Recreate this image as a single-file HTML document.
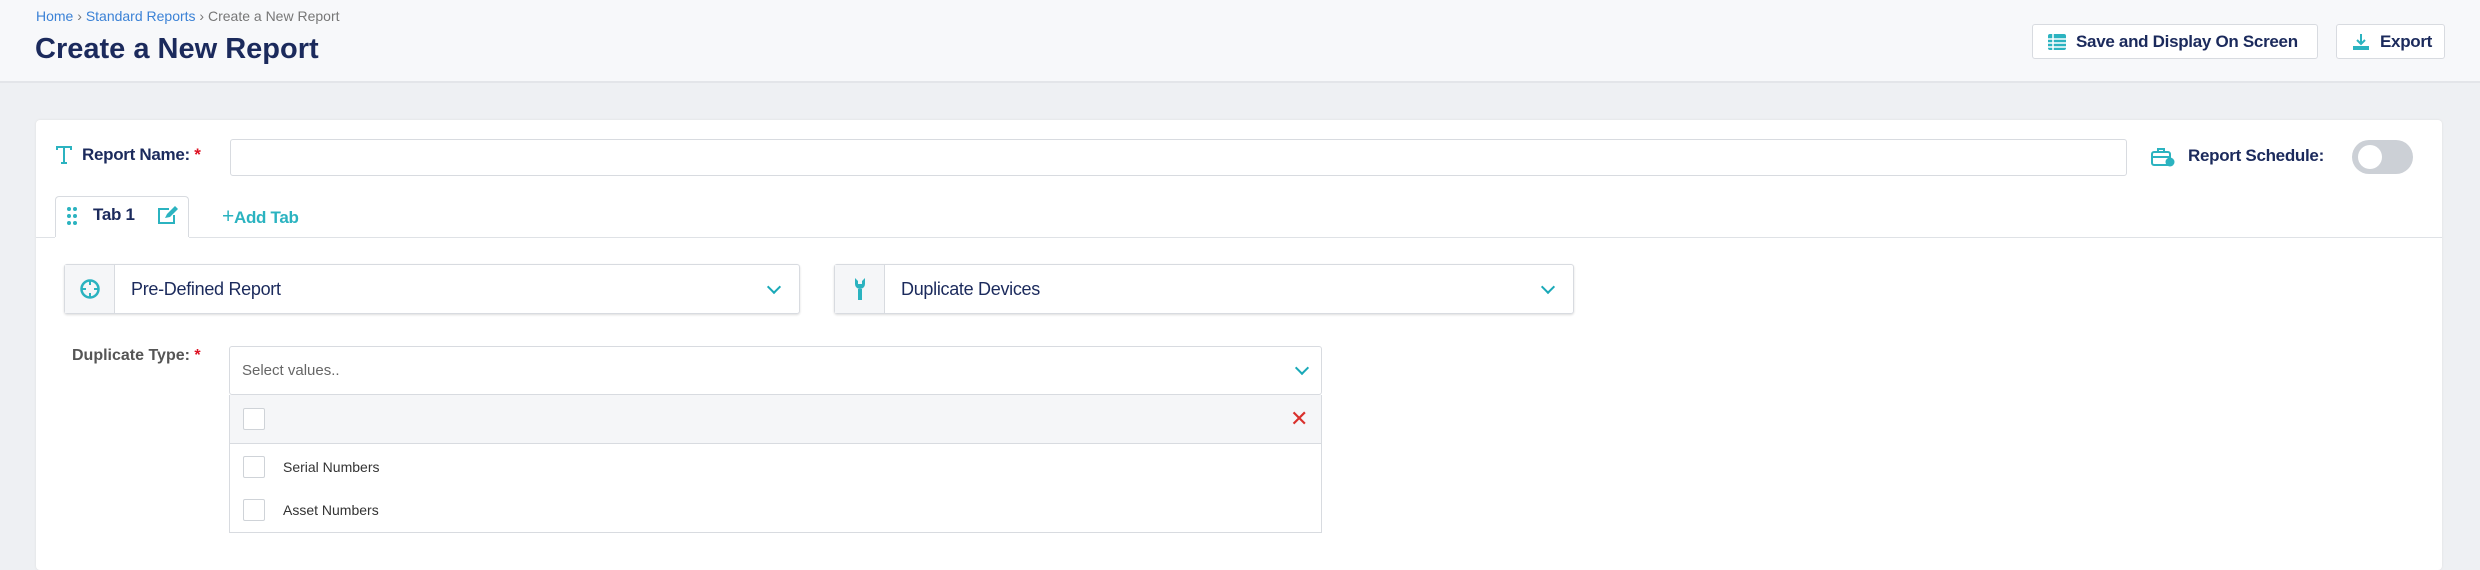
<!DOCTYPE html>
<html><head><meta charset="utf-8"><style>
*{box-sizing:border-box;margin:0;padding:0}
body{width:2480px;height:558px;overflow:hidden;background:#eef0f3;font-family:"Liberation Sans",sans-serif;position:relative}
.a{position:absolute;white-space:nowrap}
.hdr{left:0;top:0;width:2480px;height:83px;background:#f7f8fa;border-bottom:2px solid #e3e5e9}
.bc{left:36px;top:8px;font-size:14px;color:#777}
.bc span{color:#3b82d6}
.title{left:35px;top:33px;font-size:29px;font-weight:bold;color:#1b2a5c;font-family:"Liberation Sans Narrow","Liberation Sans",sans-serif}
.btn{background:#fff;border:1px solid #d8dbe0;border-radius:3px;height:35px;top:24px;font-size:17px;font-weight:bold;color:#1b2a5c;font-family:"Liberation Sans Narrow","Liberation Sans",sans-serif;display:flex;align-items:center;padding-left:14px;gap:9px;letter-spacing:-0.3px}
.card{left:36px;top:120px;width:2406px;height:450px;background:#fff;border-radius:4px;box-shadow:0 0 2px #ddd}
.lbl{font-size:17px;font-weight:bold;color:#1b2a5c;font-family:"Liberation Sans Narrow","Liberation Sans",sans-serif;letter-spacing:-0.3px}
.inp{border:1px solid #d8dbe0;border-radius:3px;background:#fff}
.sel{border:1px solid #d8dbe0;border-radius:3px;height:50px;top:264px;box-shadow:0 1px 2px #ddd;display:flex;align-items:center}
.sel .ic{width:50px;height:100%;background:#f5f6f8;border-right:1px solid #d8dbe0;display:flex;align-items:center;justify-content:center}
.sel .t{padding-left:16px;font-size:18px;color:#1b2a5c;flex:1;font-family:"Liberation Sans Narrow","Liberation Sans",sans-serif;letter-spacing:-0.3px}
.chev{width:10px;height:10px;border-right:2px solid #1aa9b8;border-bottom:2px solid #1aa9b8;transform:rotate(45deg);margin-right:20px;margin-top:-5px}
.cb{width:22px;height:22px;border:1px solid #cfd3d8;border-radius:2px;background:#fff}
.opt{font-size:15px;color:#333;font-family:"Liberation Sans Narrow","Liberation Sans",sans-serif}
</style></head><body>
<div class="a hdr"></div>
<div class="a bc"><span>Home</span> › <span>Standard Reports</span> › Create a New Report</div>
<div class="a title">Create a New Report</div>
<div class="a btn" style="left:2032px;width:286px"><svg width="20" height="18" viewBox="0 0 20 18"><rect x="1" y="1" width="18" height="16" rx="2" fill="#2bb3c0"/><path d="M1 6h18M1 10h18M1 14h18M6 1v16" stroke="#fff" stroke-width="1.5"/></svg>Save and Display On Screen</div>
<div class="a btn" style="left:2336px;width:109px"><svg width="20" height="20" viewBox="0 0 20 20"><path d="M10 2v10M6 8l4 4 4-4" stroke="#2bb3c0" stroke-width="2" fill="none"/><rect x="2" y="14" width="16" height="4" fill="#2bb3c0"/></svg>Export</div>
<div class="a card"></div>
<svg class="a" style="left:55px;top:145px" width="18" height="20" viewBox="0 0 18 20"><path d="M2 5V2h14v3M9 2v16M6 18h6" stroke="#2bb3c0" stroke-width="2" fill="none"/></svg>
<div class="a lbl" style="left:82px;top:145px">Report Name: <span style="color:#d12">*</span></div>
<div class="a inp" style="left:230px;top:139px;width:1897px;height:37px"></div>
<svg class="a" style="left:2151px;top:147px" width="24" height="20" viewBox="0 0 24 20"><rect x="1" y="5" width="18" height="13" rx="2" stroke="#2bb3c0" stroke-width="2" fill="none"/><path d="M7 5V2h6v3M1 10h18" stroke="#2bb3c0" stroke-width="2" fill="none"/><circle cx="19" cy="15" r="4.5" fill="#2bb3c0"/></svg>
<div class="a lbl" style="left:2188px;top:146px">Report Schedule:</div>
<div class="a" style="left:2352px;top:140px;width:61px;height:34px;border-radius:17px;background:#ccd0d6"><div class="a" style="left:6px;top:5px;width:24px;height:24px;border-radius:12px;background:#fff"></div></div>
<div class="a" style="left:55px;top:196px;width:134px;height:42px;border:1px solid #d8dbe0;border-bottom:none;border-radius:4px 4px 0 0;background:#fff"></div>
<div class="a" style="left:36px;top:237px;width:2406px;height:1px;background:#dfe2e6"></div>
<div class="a" style="left:55px;top:237px;width:134px;height:2px;background:#fff"></div>
<svg class="a" style="left:66px;top:206px" width="12" height="20" viewBox="0 0 12 20"><g fill="#2bb3c0"><circle cx="3" cy="3" r="2"/><circle cx="9" cy="3" r="2"/><circle cx="3" cy="10" r="2"/><circle cx="9" cy="10" r="2"/><circle cx="3" cy="17" r="2"/><circle cx="9" cy="17" r="2"/></g></svg>
<div class="a lbl" style="left:93px;top:205px">Tab 1</div>
<svg class="a" style="left:157px;top:205px" width="22" height="20" viewBox="0 0 22 20"><path d="M12 4H2v14h15v-8" stroke="#2bb3c0" stroke-width="2" fill="none"/><path d="M8 13l2-4 8-8 3 3-8 8z" fill="#2bb3c0"/></svg>
<div class="a lbl" style="left:222px;top:205px;color:#2bb3c0;font-weight:bold"><span style="font-weight:normal;font-size:21px">+</span>Add Tab</div>
<div class="a sel" style="left:64px;width:736px"><div class="ic"><svg width="22" height="22" viewBox="0 0 22 22"><circle cx="11" cy="11" r="8.5" stroke="#2bb3c0" stroke-width="2.5" fill="none"/><path d="M11 2v5M11 15v5M2 11h5M15 11h5" stroke="#2bb3c0" stroke-width="2"/></svg></div><div class="t">Pre-Defined Report</div><div class="chev"></div></div>
<div class="a sel" style="left:834px;width:740px"><div class="ic"><svg width="16" height="24" viewBox="0 0 16 24"><path d="M3 1v6a5 5 0 0 0 10 0V1l-3 3v3H6V4z M6 12h4v11H6z" fill="#2bb3c0"/></svg></div><div class="t">Duplicate Devices</div><div class="chev"></div></div>
<div class="a opt" style="left:72px;top:347px;font-weight:bold;color:#555;font-size:16px">Duplicate Type: <span style="color:#d12">*</span></div>
<div class="a inp" style="left:229px;top:346px;width:1093px;height:49px;display:flex;align-items:center;justify-content:space-between;padding-left:12px"><span class="opt" style="color:#666;font-size:15px">Select values..</span><div class="chev" style="margin-right:14px"></div></div>
<div class="a" style="left:229px;top:395px;width:1093px;height:138px;border:1px solid #d8dbe0;border-top:none;background:#fff"></div>
<div class="a" style="left:229px;top:395px;width:1093px;height:49px;background:#f5f6f8;border:1px solid #d8dbe0;border-top:none"></div>
<div class="a cb" style="left:243px;top:408px"></div>
<div class="a" style="left:1290px;top:406px;color:#d9302c;font-size:22px">✕</div>
<div class="a cb" style="left:243px;top:456px"></div>
<div class="a opt" style="left:283px;top:459px;font-size:14px">Serial Numbers</div>
<div class="a cb" style="left:243px;top:499px"></div>
<div class="a opt" style="left:283px;top:502px;font-size:14px">Asset Numbers</div>
</body></html>
